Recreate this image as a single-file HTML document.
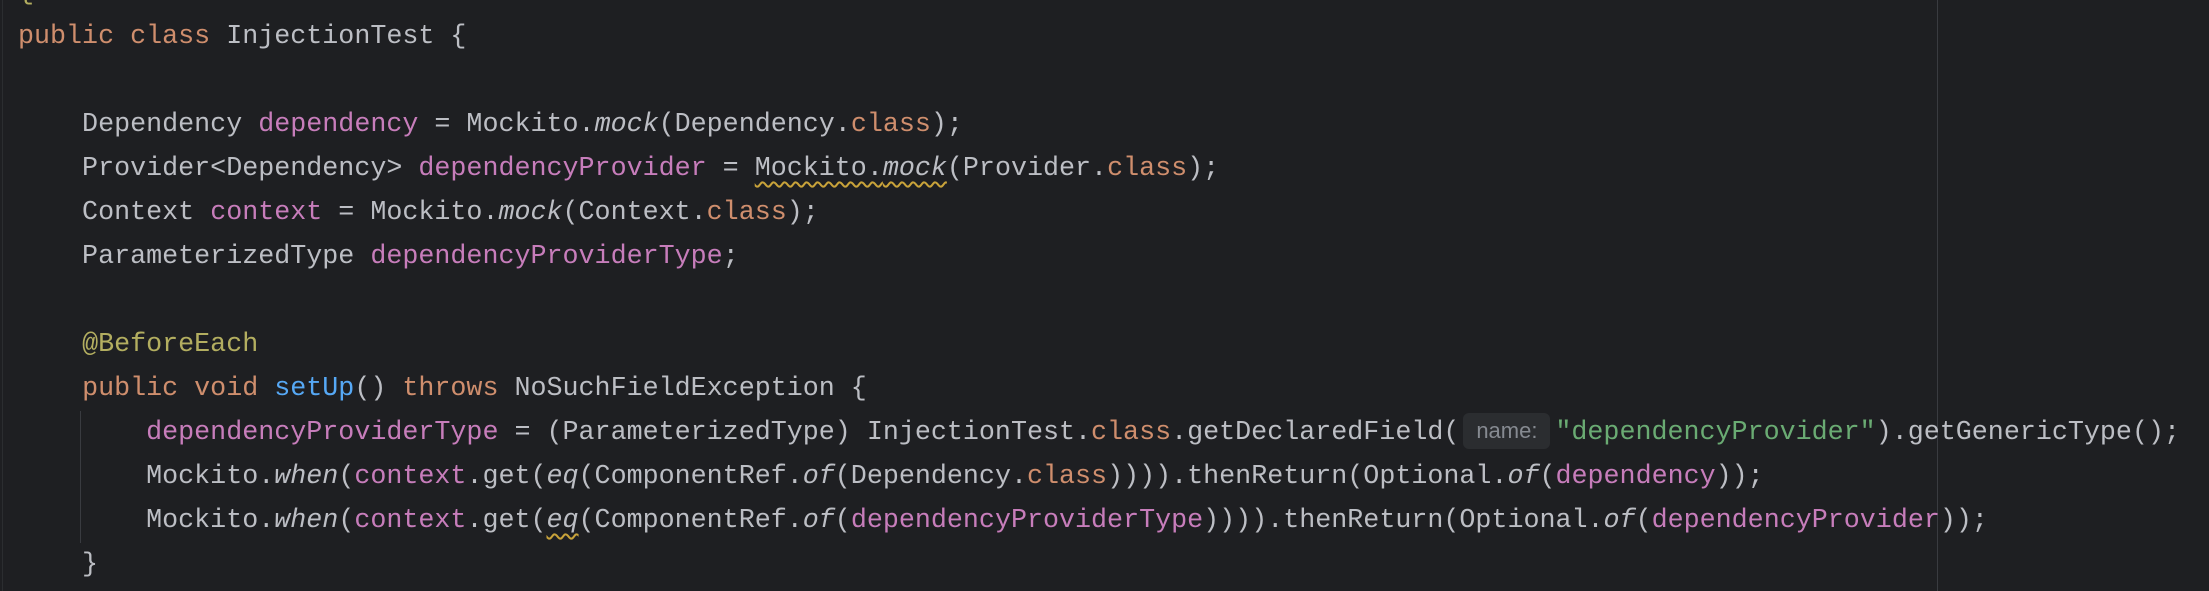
<!DOCTYPE html>
<html><head><style>
html,body{margin:0;padding:0;background:#1e1f22;width:2209px;height:591px;overflow:hidden;}
.code{position:absolute;left:18px;top:-29px;font-family:"Liberation Mono",monospace;font-size:26.7px;line-height:44px;color:#bcbec4;white-space:pre;}
.k{color:#cf8e6d}.f{color:#c77dbb}.s{color:#6aab73}.a{color:#b3ae60}.m{color:#56a8f5}.i{font-style:italic}
.w{text-decoration:underline wavy #c9a33a;text-decoration-thickness:1.5px;text-underline-offset:6px}
.h{display:inline-block;font-family:"Liberation Sans",sans-serif;font-size:22px;color:#868a91;background:#2b2d30;border-radius:6px;width:87px;height:36px;line-height:36px;text-align:center;margin:0 5px 0 4px;vertical-align:1px}
.vl{position:absolute;left:1937px;top:0;width:1px;height:591px;background:#393b40}
.g{position:absolute;left:80px;top:411px;width:1px;height:132px;background:#393b40}
.gl{position:absolute;left:2px;top:0;width:1px;height:591px;background:#2b2d30}
</style></head><body>
<div class="gl"></div><div class="vl"></div><div class="g"></div>
<div class="code"><div class="a">{</div><div><span class="k">public class</span> InjectionTest {</div><div> </div><div>    Dependency <span class="f">dependency</span> = Mockito.<span class="i">mock</span>(Dependency.<span class="k">class</span>);</div><div>    Provider&lt;Dependency&gt; <span class="f">dependencyProvider</span> = <span class="w">Mockito.<span class="i">mock</span></span>(Provider.<span class="k">class</span>);</div><div>    Context <span class="f">context</span> = Mockito.<span class="i">mock</span>(Context.<span class="k">class</span>);</div><div>    ParameterizedType <span class="f">dependencyProviderType</span>;</div><div> </div><div>    <span class="a">@BeforeEach</span></div><div>    <span class="k">public void</span> <span class="m">setUp</span>() <span class="k">throws</span> NoSuchFieldException {</div><div>        <span class="f">dependencyProviderType</span> = (ParameterizedType) InjectionTest.<span class="k">class</span>.getDeclaredField(<span class="h">name:</span><span class="s">"dependencyProvider"</span>).getGenericType();</div><div>        Mockito.<span class="i">when</span>(<span class="f">context</span>.get(<span class="i">eq</span>(ComponentRef.<span class="i">of</span>(Dependency.<span class="k">class</span>)))).thenReturn(Optional.<span class="i">of</span>(<span class="f">dependency</span>));</div><div>        Mockito.<span class="i">when</span>(<span class="f">context</span>.get(<span class="i w">eq</span>(ComponentRef.<span class="i">of</span>(<span class="f">dependencyProviderType</span>)))).thenReturn(Optional.<span class="i">of</span>(<span class="f">dependencyProvider</span>));</div><div>    }</div></div>
</body></html>
